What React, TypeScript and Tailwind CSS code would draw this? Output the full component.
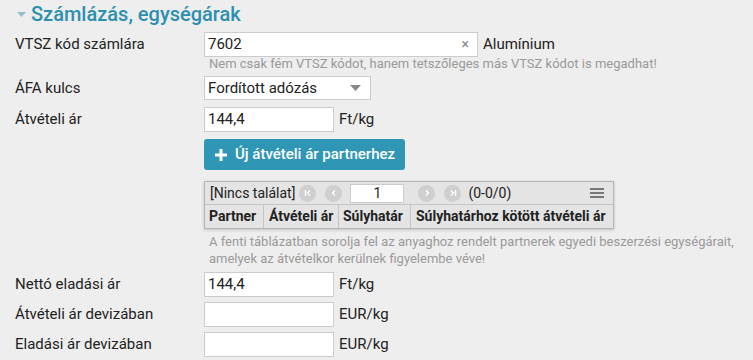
import React from "react";

function Circle({ children }: { children: React.ReactNode }) {
  return (
    <div className="w-[17px] h-[17px] rounded-full bg-[#cfcfcf] flex items-center justify-center">
      {children}
    </div>
  );
}

function Row({ label, children, className = "" }: { label: string; children: React.ReactNode; className?: string }) {
  return (
    <div className={"flex items-center " + className}>
      <div className="w-[204px] pl-[15px] text-[15px] text-[#222]">{label}</div>
      {children}
    </div>
  );
}

function Input({ value = "", w }: { value?: string; w: string }) {
  return (
    <div className={"h-[25px] bg-white border border-[#cccccc] flex items-center pl-[3px] text-[15px] text-[#222] " + w}>
      {value}
    </div>
  );
}

export default function App() {
  return (
    <div
      className="w-[753px] h-[360px] overflow-hidden bg-[#eeeeee] text-[#222]"
      style={{ fontFamily: "Roboto, 'Noto Sans', sans-serif" }}
    >
      <div className="h-[28px] flex items-center pl-[17px]">
        <svg width="9" height="6" viewBox="0 0 9 6" className="mt-[1px]">
          <polygon points="0,0 9,0 4.5,5" fill="#95bfcf" />
        </svg>
        <span className="ml-[5px] text-[20px] font-medium text-[#2d8fb0] leading-none">Számlázás, egységárak</span>
      </div>

      <Row label="VTSZ kód számlára" className="mt-[4px]">
        <div className="w-[274px] h-[25px] bg-white border border-[#cccccc] flex items-center pl-[3px] pr-[8px] text-[15px]">
          <span className="flex-1">7602</span>
          <span className="text-[#888] text-[14px]">×</span>
        </div>
        <span className="ml-[5px] text-[15px]">Alumínium</span>
      </Row>
      <div className="pl-[209px] text-[13px] text-[#9a9a9a] leading-[14px] mt-[0px]">
        Nem csak fém VTSZ kódot, hanem tetszőleges más VTSZ kódot is megadhat!
      </div>

      <Row label="ÁFA kulcs" className="mt-[5px]">
        <div className="w-[167px] h-[24px] bg-white border border-[#cccccc] flex items-center pl-[3px] pr-[9px] text-[15px]">
          <span className="flex-1">Fordított adózás</span>
          <svg width="11" height="6" viewBox="0 0 11 6">
            <polygon points="0,0 11,0 5.5,6" fill="#888" />
          </svg>
        </div>
      </Row>

      <Row label="Átvételi ár" className="mt-[7px]">
        <Input value="144,4" w="w-[130px]" />
        <span className="ml-[5px] text-[15px]">Ft/kg</span>
      </Row>

      <div className="pl-[204px] mt-[7px]">
        <div className="w-[201px] h-[31px] rounded-[3px] bg-[#2f97b5] flex items-center pl-[11px] text-white text-[15px] font-medium">
          <svg width="12" height="12" viewBox="0 0 12 12">
            <rect x="4.5" y="0" width="3" height="12" fill="white" />
            <rect x="0" y="4.5" width="12" height="3" fill="white" />
          </svg>
          <span className="ml-[8px]">Új átvételi ár partnerhez</span>
        </div>
      </div>

      <div className="pl-[204px] mt-[11px]">
        <div className="w-[410px] border border-[#b5b5b5] bg-[#e4e4e4] shadow-[0_1px_3px_rgba(0,0,0,0.2)]">
          <div className="h-[23px] flex items-center pl-[5px] text-[14px] border-b border-[#c4c4c4]">
            <span>[Nincs találat]</span>
            <div className="ml-[4px] flex items-center gap-[9px]">
              <Circle>
                <svg width="8" height="8" viewBox="0 0 8 8"><path d="M1.5 1v6M6 1.5L3.5 4L6 6.5" stroke="white" strokeWidth="1.4" fill="none" /></svg>
              </Circle>
              <Circle>
                <svg width="8" height="8" viewBox="0 0 8 8"><path d="M5 1.5L2.5 4L5 6.5" stroke="white" strokeWidth="1.4" fill="none" /></svg>
              </Circle>
            </div>
            <div className="ml-[8px] w-[54px] h-[19px] bg-white border border-[#cccccc] flex items-center justify-center text-[14px]">1</div>
            <div className="ml-[14px] flex items-center gap-[9px]">
              <Circle>
                <svg width="8" height="8" viewBox="0 0 8 8"><path d="M3 1.5L5.5 4L3 6.5" stroke="white" strokeWidth="1.4" fill="none" /></svg>
              </Circle>
              <Circle>
                <svg width="8" height="8" viewBox="0 0 8 8"><path d="M2 1.5L4.5 4L2 6.5M6.5 1v6" stroke="white" strokeWidth="1.4" fill="none" /></svg>
              </Circle>
            </div>
            <span className="ml-[7px]">(0-0/0)</span>
            <div className="ml-auto mr-[9px] flex flex-col gap-[2px]">
              <div className="w-[14px] h-[2px] bg-[#777]" />
              <div className="w-[14px] h-[2px] bg-[#777]" />
              <div className="w-[14px] h-[2px] bg-[#777]" />
            </div>
          </div>
          <div className="h-[23px] flex text-[14px] font-bold">
            <div className="w-[59px] pl-[4px] flex items-center border-r border-[#c4c4c4]">Partner</div>
            <div className="w-[75px] pl-[5px] flex items-center border-r border-[#c4c4c4]">Átvételi ár</div>
            <div className="w-[72px] pl-[4px] flex items-center border-r border-[#c4c4c4]">Súlyhatár</div>
            <div className="flex-1 pl-[5px] flex items-center">Súlyhatárhoz kötött átvételi ár</div>
          </div>
        </div>
      </div>

      <div className="pl-[209px] mt-[4px] text-[13px] text-[#9a9a9a] leading-[17px]">
        A fenti táblázatban sorolja fel az anyaghoz rendelt partnerek egyedi beszerzési egységárait,
        <br />
        amelyek az átvételkor kerülnek figyelembe véve!
      </div>

      <Row label="Nettó eladási ár" className="mt-[5px]">
        <Input value="144,4" w="w-[130px]" />
        <span className="ml-[5px] text-[15px]">Ft/kg</span>
      </Row>
      <Row label="Átvételi ár devizában" className="mt-[5px]">
        <Input w="w-[130px]" />
        <span className="ml-[5px] text-[15px]">EUR/kg</span>
      </Row>
      <Row label="Eladási ár devizában" className="mt-[5px]">
        <Input w="w-[130px]" />
        <span className="ml-[5px] text-[15px]">EUR/kg</span>
      </Row>
    </div>
  );
}
